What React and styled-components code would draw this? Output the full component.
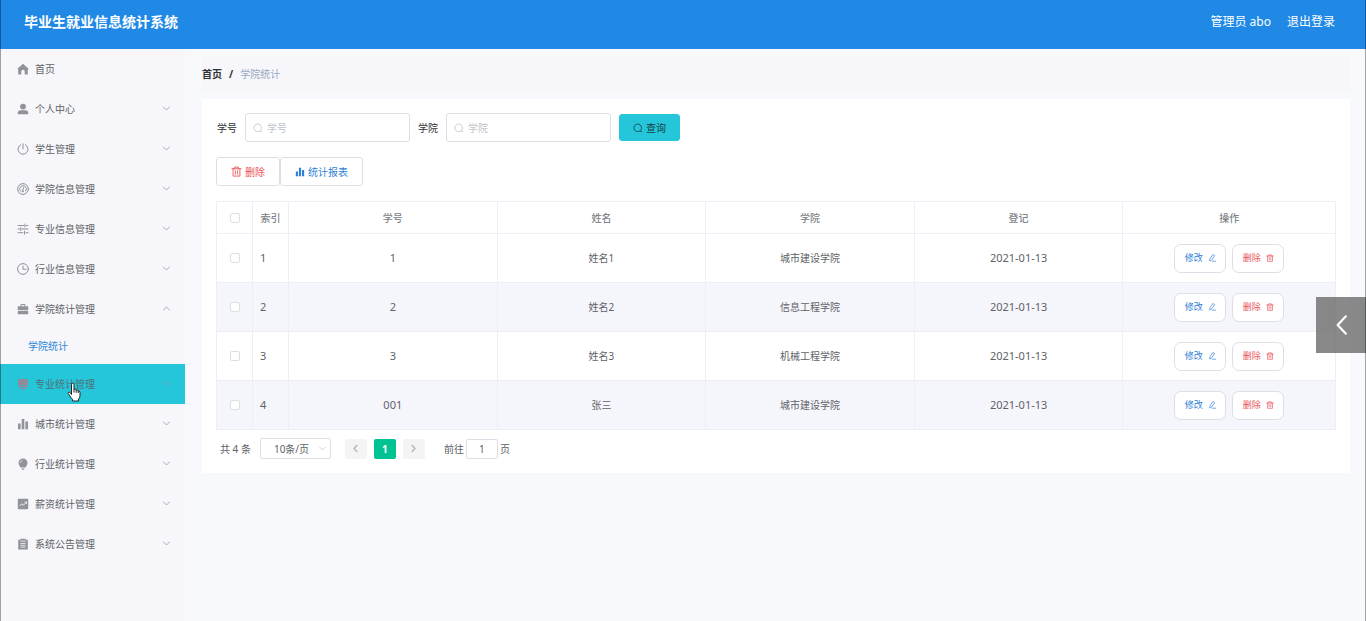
import React from "react";
import styled, { createGlobalStyle, css } from "styled-components";

const GlobalStyle = createGlobalStyle`
  *, *::before, *::after { box-sizing: border-box; }
  body {
    margin: 0;
    background: #f7f9fd;
    color: #606266;
    font-family: "Noto Sans", "Noto Sans CJK SC", sans-serif;
    font-size: 10px;
    line-height: 16px;
  }
  button, input, select { font: inherit; color: inherit; margin: 0; }
  button { cursor: pointer; }
  a { color: inherit; text-decoration: none; }
`;

const Frame = styled.div`
  min-height: 100vh;
  display: flex;
  flex-direction: column;
  &::after {
    content: "";
    position: fixed;
    inset: 0;
    border: solid rgba(0, 0, 0, 0.35);
    border-width: 0 1px;
    pointer-events: none;
  }
`;

const Header = styled.header`
  display: flex;
  align-items: center;
  justify-content: space-between;
  height: 49px;
  padding: 0 31px 6px 24px;
  background: #2089e5;
  color: #fff;
`;

const Title = styled.h1`
  margin: 0;
  font-size: 14px;
  line-height: 20px;
  font-weight: 700;
`;

const UserNav = styled.nav`
  display: flex;
  gap: 16px;
  font-size: 12px;
`;

const Body = styled.div`
  flex: 1;
  display: flex;
`;

const Sidebar = styled.aside`
  width: 185px;
  flex: none;
  background: #f6f6fb;
`;

const MenuList = styled.ul`
  list-style: none;
  margin: 0;
  padding: 0;
`;

const MenuItem = styled.li`
  position: relative;
`;

const MenuButton = styled.button`
  display: flex;
  align-items: center;
  gap: 6px;
  width: 100%;
  height: 40px;
  padding: 0 14px 0 17px;
  border: 0;
  text-align: left;
  background: ${(p) => (p.$active ? "#26c6da" : "transparent")};
  color: ${(p) => (p.$active ? "#4f7078" : "#606266")};
  svg { color: ${(p) => (p.$active ? "#92899a" : "#909399")}; }
`;

const MenuLabel = styled.span`
  flex: 1;
`;

const Arrow = styled.span`
  display: flex;
  padding-bottom: 2px;
`;

const SubLink = styled.a`
  display: flex;
  align-items: center;
  height: 35px;
  padding: 0 0 2px 28px;
  color: #2f86d8;
`;

const Cursor = styled.svg`
  position: absolute;
  left: 67px;
  top: 18px;
  width: 14px;
  height: 20px;
`;

const Main = styled.main`
  flex: 1;
  min-width: 0;
  padding: 8px 16px 16px 17px;
`;

const Breadcrumb = styled.nav`
  display: flex;
  align-items: center;
  gap: 7px;
  height: 35px;
  padding-bottom: 2px;
  margin-bottom: 7px;
  background: #f6f6fb;
  color: #303133;
  font-weight: 700;
`;

const Current = styled.span`
  font-weight: 400;
  color: #97a8be;
`;

const Card = styled.section`
  padding: 14px;
  background: #fff;
`;

const SearchForm = styled.form`
  display: flex;
  align-items: center;
  gap: 8px;
  margin-bottom: 15px;
  padding-left: 1px;
  color: #303133;
`;

const InputBox = styled.span`
  display: flex;
  align-items: center;
  gap: 4px;
  width: 165px;
  height: 29px;
  padding: 0 7px;
  border: 1px solid #dcdfe6;
  border-radius: 3px;
  background: #fff;
  color: #c0c4cc;
`;

const TextInput = styled.input`
  flex: 1;
  min-width: 0;
  padding: 0;
  border: 0;
  outline: 0;
  background: transparent;
  color: #606266;
  &::placeholder { color: #c0c4cc; opacity: 1; }
`;

const tones = { danger: "#e9555b", primary: "#2f7fd6", dark: "#123f47" };

const Button = styled.button`
  display: inline-flex;
  align-items: center;
  justify-content: center;
  gap: 3px;
  height: 29px;
  padding: 0 14px;
  border: 1px solid #dcdfe6;
  border-radius: 3px;
  background: #fff;
  color: ${(p) => tones[p.$tone]};
  ${(p) => p.$filled && css`
    height: 27px;
    padding: 0 13px;
    border-color: #26c6da;
    background: #26c6da;
  `}
  ${(p) => p.$small && css`
    width: 52px;
    padding: 0;
    gap: 5px;
    border-radius: 7px;
    font-size: 9px;
  `}
`;

const Toolbar = styled.div`
  display: flex;
  margin-bottom: 15px;
`;

const Table = styled.table`
  width: 100%;
  table-layout: fixed;
  border-collapse: collapse;
  text-align: center;
`;

const Col = styled.col`
  width: ${(p) => p.$width || "auto"};
`;

const HeadCell = styled.th`
  height: 32px;
  padding: 0;
  border: 1px solid #eeeff6;
  font-weight: 500;
  color: #808389;
`;

const Row = styled.tr`
  height: 49px;
  background: ${(p) => (p.$striped ? "#f5f5fc" : "#fff")};
`;

const Cell = styled.td`
  padding: 0;
  border: 1px solid #eeeff6;
  font-size: ${(p) => (p.$numeric ? "11px" : "10px")};
  text-align: ${(p) => (p.$start ? "left" : "center")};
  padding-left: ${(p) => (p.$start ? "7px" : "0")};
`;

const Checkbox = styled.input`
  appearance: none;
  display: block;
  width: 10px;
  height: 10px;
  margin: 0 auto;
  border: 1px solid #dcdfe6;
  border-radius: 2px;
  background: #fff;
  &:checked { background: #26c6da; }
`;

const Actions = styled.div`
  display: flex;
  justify-content: center;
  gap: 6px;
`;

const Pagination = styled.div`
  display: flex;
  align-items: center;
  height: 21px;
  margin: 8px 0 0 4px;
`;

const SelectBox = styled.span`
  display: grid;
  align-items: center;
  width: 71px;
  margin: 0 14px 0 9px;
  svg {
    grid-area: 1 / 1;
    justify-self: end;
    margin-right: 4px;
    color: #c0c4cc;
    pointer-events: none;
  }
`;

const Select = styled.select`
  grid-area: 1 / 1;
  appearance: none;
  width: 100%;
  height: 21px;
  padding: 0 13px;
  border: 1px solid #dcdfe6;
  border-radius: 2px;
  background: #fff;
`;

const Pages = styled.div`
  display: flex;
  gap: 7px;
  margin-right: 19px;
`;

const PageButton = styled.button`
  display: flex;
  align-items: center;
  justify-content: center;
  width: 22px;
  height: 20px;
  padding: 0;
  border: 0;
  border-radius: 2px;
  font-weight: 700;
  background: ${(p) => (p.$current ? "#00c292" : "#f4f4f5")};
  color: ${(p) => (p.$current ? "#fff" : "#b4b8c0")};
`;

const Jump = styled.label`
  display: flex;
  align-items: center;
  gap: 2px;
`;

const JumpInput = styled.input`
  width: 32px;
  height: 20px;
  padding: 0;
  border: 1px solid #dcdfe6;
  border-radius: 2px;
  text-align: center;
`;

const DrawerTab = styled.button`
  position: fixed;
  right: 0;
  top: 297px;
  display: flex;
  align-items: center;
  justify-content: center;
  width: 50px;
  height: 56px;
  padding: 0 0 0 2px;
  border: 0;
  background: rgba(96, 96, 96, 0.74);
  color: #fff;
`;

const line = { fill: "none", stroke: "currentColor", strokeLinecap: "round", strokeLinejoin: "round" };
const solid = { fill: "currentColor" };

const shapes = {
  home: <path {...solid} d="M6 .8 11.600 5.800 10.800 6.600V11.500H7.700V8.500a1.700 1.700 0 0 0-3.400 0v3H1.200V6.600L.4 5.800Z" />,
  user: <g {...solid}><circle cx="6" cy="3.6" r="2.9" /><path d="M.8 11.300V9.600Q.8 7.400 3.400 7.200h5.200Q11.200 7.400 11.200 9.600V11.300Z" /></g>,
  power: <path {...line} d="M3.6 1.8a5 5 0 1 0 4.8 0M6 .8v5" />,
  gauge: <g {...line}><circle cx="6" cy="6" r="5.4" /><path d="M3.200 8A3.400 3.400 0 1 1 8.800 8M6.600 4.500 5.700 7.600" /><circle cx="5.700" cy="8.300" r=".6" /></g>,
  sliders: <path {...line} d="M1 2.5h6M9.5 2.5H11M8 1v3M1 6h1.5M5 6h6M3.7 4.6v3M1 9.7h5M9 9.7h2M7.5 8.2v3" />,
  clock: <g {...line}><circle cx="6" cy="6" r="5.4" /><path d="M6 3v3.300h3" /></g>,
  briefcase: <g><path {...line} d="M4 3.500V1.500h4v2" /><path {...solid} d="M.8 3.300H11.200V7H.8ZM.8 7.700H11.200V11.300H.8Z" /></g>,
  platform: <path {...solid} d="M1.800 1h8.400q.8 0 .8.800V7.500H1V1.800Q1 1 1.800 1ZM1 8h10q0 1.200-1 1.200H2q-1 0-1-1.200ZM3 10h6v1.200H3Z" />,
  chart: <path {...solid} d="M1 5.500h2.600v5.700H1ZM4.700 1h2.600v10.200H4.700ZM8.400 3.600H11v7.600H8.400Z" />,
  bulb: <g><path {...solid} d="M6 .5a4.500 4.500 0 0 1 4.500 4.500c0 2-1.300 2.800-1.900 4.400H3.400C2.800 7.800 1.500 7 1.500 5A4.500 4.500 0 0 1 6 .5ZM4.400 10.500h3.200l-.6 1.200H5Z" /><path d="M3.300 4.800Q3.500 2.700 5.400 2.300" fill="none" stroke="#f6f6fb" strokeWidth=".7" /></g>,
  trend: <g><rect {...solid} x=".8" y=".8" width="10.400" height="10.400" rx=".7" /><path d="m2.600 8 2.200-2.200 1.600 1.400 3-3M7.600 4h1.900v1.900" fill="none" stroke="#f6f6fb" strokeWidth=".9" /></g>,
  clipboard: <g><path {...solid} d="M1.200 1.800H3.500V.8H8.500V1.800H10.800V11.600H1.200Z" /><path d="M3.200 3.100h5.600M3.500 5.500h5M3.500 7.300h5M3.500 9.100h5" fill="none" stroke="#f6f6fb" strokeWidth=".8" /></g>,
  search: <path {...line} d="M8.500 9.500A4.600 4.600 0 1 1 9.600 8.300M8.500 9.500l2 1" />,
  trash: <path {...line} d="M1 3h10M4 3V1.200h4V3M2.300 3v8h7.400V3M4.800 5.200v3.600M7.200 5.200v3.600" />,
  edit: <path {...line} d="M7.800 1 10 2.400 5.300 9.200 2.500 10.600 2.900 7.600ZM6.500 10.800h5" />,
  down: <path {...line} d="m2 4 4 4 4-4" />,
  up: <path {...line} d="m2 8 4-4 4 4" />,
  left: <path {...line} d="M7.800 2 4 6l3.800 4" />,
  right: <path {...line} d="M4.200 2 8 6l-3.800 4" />,
};

function Icon({ name, size = 12, weight = 1 }) {
  return (
    <svg width={size} height={size} viewBox="0 0 12 12" strokeWidth={weight} aria-hidden="true">
      {shapes[name]}
    </svg>
  );
}

const menu = [
  { icon: "home", label: "首页", leaf: true },
  { icon: "user", label: "个人中心" },
  { icon: "power", label: "学生管理" },
  { icon: "gauge", label: "学院信息管理" },
  { icon: "sliders", label: "专业信息管理" },
  { icon: "clock", label: "行业信息管理" },
  { icon: "briefcase", label: "学院统计管理", child: "学院统计" },
  { icon: "platform", label: "专业统计管理", active: true },
  { icon: "chart", label: "城市统计管理" },
  { icon: "bulb", label: "行业统计管理" },
  { icon: "trend", label: "薪资统计管理" },
  { icon: "clipboard", label: "系统公告管理" },
];

const rows = [
  { id: "1", name: "姓名1", college: "城市建设学院", date: "2021-01-13" },
  { id: "2", name: "姓名2", college: "信息工程学院", date: "2021-01-13" },
  { id: "3", name: "姓名3", college: "机械工程学院", date: "2021-01-13" },
  { id: "001", name: "张三", college: "城市建设学院", date: "2021-01-13" },
];

function SearchField({ id, label }) {
  return (
    <>
      <label htmlFor={id}>{label}</label>
      <InputBox>
        <Icon name="search" size={10} />
        <TextInput id={id} placeholder={label} />
      </InputBox>
    </>
  );
}

export default function App() {
  return (
    <Frame>
      <GlobalStyle />
      <Header>
        <Title>毕业生就业信息统计系统</Title>
        <UserNav>
          <span>管理员 abo</span>
          <a href="#logout">退出登录</a>
        </UserNav>
      </Header>
      <Body>
        <Sidebar>
          <MenuList>
            {menu.map((m) => (
              <MenuItem key={m.label}>
                <MenuButton type="button" $active={m.active} aria-expanded={m.leaf ? undefined : !!m.child}>
                  <Icon name={m.icon} />
                  <MenuLabel>{m.label}</MenuLabel>
                  {!m.leaf && (
                    <Arrow>
                      <Icon name={m.child ? "up" : "down"} size={9} />
                    </Arrow>
                  )}
                </MenuButton>
                {m.child && <SubLink href="#college">{m.child}</SubLink>}
                {m.active && (
                  <Cursor viewBox="0 0 14 20" aria-hidden="true">
                    <path
                      d="M4.500 12.500V2.500Q4.500 1 5.700 1T7 2.500V7.200Q8.800 6.500 9.200 8Q10.800 7.400 11.200 8.900Q13 8.700 13 10.500V13.500Q13 15.500 11.500 17.200V19H5.500V17.300Q3.800 15.800 3 14L1.200 11.500Q.8 10.200 2.200 10.100Q3.200 10.200 4.500 12.500ZM7 7.200V10.500M9.200 8V10.800M11.200 8.900V11"
                      fill="#fff"
                      stroke="#222"
                      strokeLinejoin="round"
                    />
                  </Cursor>
                )}
              </MenuItem>
            ))}
          </MenuList>
        </Sidebar>
        <Main>
          <Breadcrumb>
            <a href="#home">首页</a>
            <span>/</span>
            <Current>学院统计</Current>
          </Breadcrumb>
          <Card>
            <SearchForm onSubmit={(e) => e.preventDefault()}>
              <SearchField id="number" label="学号" />
              <SearchField id="college" label="学院" />
              <Button $tone="dark" $filled>
                <Icon name="search" size={10} />
                查询
              </Button>
            </SearchForm>
            <Toolbar>
              <Button type="button" $tone="danger">
                <Icon name="trash" size={11} />
                删除
              </Button>
              <Button type="button" $tone="primary">
                <Icon name="chart" size={10} />
                统计报表
              </Button>
            </Toolbar>
            <Table>
              <colgroup>
                <Col $width="36px" />
                <Col $width="36px" />
                <Col />
                <Col />
                <Col />
                <Col />
                <Col $width="19%" />
              </colgroup>
              <thead>
                <tr>
                  <HeadCell><Checkbox type="checkbox" aria-label="全选" /></HeadCell>
                  <HeadCell>索引</HeadCell>
                  <HeadCell>学号</HeadCell>
                  <HeadCell>姓名</HeadCell>
                  <HeadCell>学院</HeadCell>
                  <HeadCell>登记</HeadCell>
                  <HeadCell>操作</HeadCell>
                </tr>
              </thead>
              <tbody>
                {rows.map((r, i) => (
                  <Row key={r.id} $striped={i % 2 === 1}>
                    <Cell><Checkbox type="checkbox" aria-label={r.name} /></Cell>
                    <Cell $numeric $start>{i + 1}</Cell>
                    <Cell $numeric>{r.id}</Cell>
                    <Cell>{r.name}</Cell>
                    <Cell>{r.college}</Cell>
                    <Cell $numeric>{r.date}</Cell>
                    <Cell>
                      <Actions>
                        <Button type="button" $tone="primary" $small>
                          修改
                          <Icon name="edit" size={8} />
                        </Button>
                        <Button type="button" $tone="danger" $small>
                          删除
                          <Icon name="trash" size={8} />
                        </Button>
                      </Actions>
                    </Cell>
                  </Row>
                ))}
              </tbody>
            </Table>
            <Pagination>
              <span>共 4 条</span>
              <SelectBox>
                <Select aria-label="每页条数" defaultValue="10">
                  <option value="10">10条/页</option>
                </Select>
                <Icon name="down" size={9} />
              </SelectBox>
              <Pages>
                <PageButton type="button" aria-label="上一页"><Icon name="left" size={9} weight={2} /></PageButton>
                <PageButton type="button" $current>1</PageButton>
                <PageButton type="button" aria-label="下一页"><Icon name="right" size={9} weight={2} /></PageButton>
              </Pages>
              <Jump>
                前往
                <JumpInput defaultValue="1" />
                页
              </Jump>
            </Pagination>
          </Card>
        </Main>
      </Body>
      <DrawerTab type="button" aria-label="展开">
        <Icon name="left" size={26} weight={1} />
      </DrawerTab>
    </Frame>
  );
}
